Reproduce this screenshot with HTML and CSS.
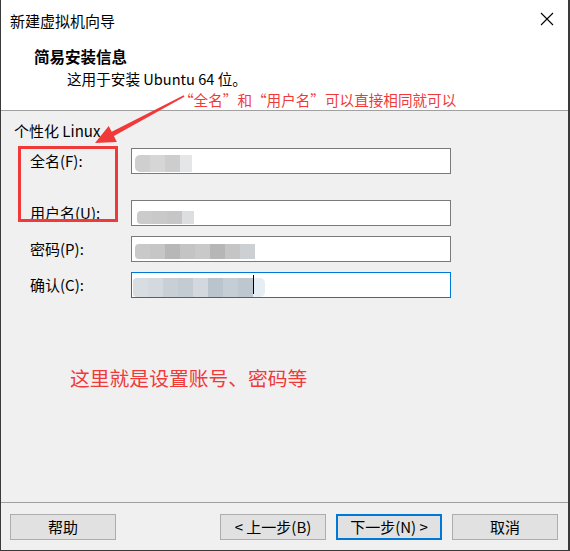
FILE: index.html
```html
<!DOCTYPE html>
<html lang="zh-CN">
<head>
<meta charset="utf-8">
<title>新建虚拟机向导</title>
<link rel="stylesheet" href="styles.css">
</head>
<body>
<div class="window">
  <div class="titlebar">
    <span class="title">新建虚拟机向导</span>
    <svg class="close" width="14" height="14" viewBox="0 0 14 14"><path d="M1 1 L13 13 M13 1 L1 13" stroke="#000" stroke-width="1.1" fill="none"/></svg>
  </div>
  <div class="header">
    <div class="heading">简易安装信息</div>
    <div class="subtitle">这用于安装 Ubuntu 64 位。</div>
  </div>
  <div class="content">
    <div class="group-label">个性化 Linux</div>
    <div class="form">
      <div class="row row-first">
        <label class="label">全名(F):</label>
        <div class="field">
          <span class="blur h17"><i class="c1"></i><i class="c2"></i><i class="c3"></i><i class="c4 narrow"></i></span>
        </div>
      </div>
      <div class="row">
        <label class="label">用户名(U):</label>
        <div class="field">
          <span class="blur h13 off2"><i class="c5"></i><i class="c6"></i><i class="c7"></i><i class="c8 narrow"></i></span>
        </div>
      </div>
      <div class="row">
        <label class="label">密码(P):</label>
        <div class="field">
          <span class="blur h15"><i class="d1"></i><i class="d2"></i><i class="d3"></i><i class="d4"></i><i class="d5"></i><i class="d6"></i><i class="d7"></i><i class="d8"></i></span>
        </div>
      </div>
      <div class="row">
        <label class="label">确认(C):</label>
        <div class="field focused">
          <span class="blur h20"><i class="e1"></i><i class="e2"></i><i class="e3"></i><i class="e4"></i><i class="e5"></i><i class="e6"></i><i class="e7"></i><i class="e8"></i><i class="e9 narrow"></i></span>
          <span class="caret"></span>
        </div>
      </div>
    </div>
  </div>
  <div class="footer">
    <button class="btn">帮助</button>
    <div class="spacer"></div>
    <button class="btn">&lt; 上一步(B)</button>
    <button class="btn default">下一步(N) &gt;</button>
    <button class="btn">取消</button>
  </div>

  <div class="note-top">“全名”和“用户名”可以直接相同就可以</div>
  <svg class="arrow" width="570" height="551" viewBox="0 0 570 551">
    <polygon points="183.7,95.2 111.7,131.7 108.7,125.9 95,143 116.9,141.9 113.9,136.1 184.4,96.8" fill="#f03a3a"/>
  </svg>
  <div class="mark-box"></div>
  <div class="note-mid">这里就是设置账号、密码等</div>
</div>
</body>
</html>
```
FILE: styles.css
```css
* { box-sizing: border-box; }
html, body { margin: 0; padding: 0; }
body {
  width: 570px;
  height: 551px;
  font-family: "Noto Sans CJK SC", "Noto Sans", sans-serif;
  font-size: 15px;
  color: #000;
  background: #f0f0f0;
}
.window {
  position: relative;
  width: 570px;
  height: 551px;
  border-left: 1px solid #3a3a3a;
  border-right: 2px solid #3a3a3a;
  border-bottom: 1px solid #3a3a3a;
  display: flex;
  flex-direction: column;
  background: #f0f0f0;
}
.titlebar {
  height: 42px;
  background: #fff;
  display: flex;
  align-items: center;
  padding-left: 9px;
  padding-right: 14px;
}
.title { line-height: 42px; flex: 1; }
.close { display: block; margin-top: -4px; }
.header {
  height: 69px;
  background: #fff;
  border-bottom: 1px solid #a0a0a0;
  padding-top: 4px;
  padding-left: 33px;
}
.heading { font-weight: bold; font-size: 15.5px; line-height: 20px; }
.subtitle { line-height: 20px; margin-top: 3px; padding-left: 33px; font-size: 14.6px; }
.content {
  flex: 1;
  padding: 10px 0 0 13px;
}
.group-label { line-height: 20px; }
.form {
  display: flex;
  flex-direction: column;
  gap: 10px;
  margin-top: 7px;
  padding-left: 16px;
}
.row { display: flex; align-items: center; height: 26px; }
.row-first { margin-bottom: 16px; }
.label { width: 101px; line-height: 20px; }
.field {
  position: relative;
  width: 320px;
  height: 26px;
  background: #fff;
  border: 1px solid #7a7a7a;
  display: flex;
  align-items: center;
  padding-left: 3px;
}
.field.focused { border-color: #0078d7; padding-left: 1px; }
.blur { display: flex; filter: blur(0.5px); }
.blur i { display: block; width: 15px; height: 100%; }
.blur i.narrow { width: 12px; }
.h17 { height: 17px; margin-top: 5px; }
.h13 { height: 13px; margin-top: 9px; }
.h15 { height: 15px; margin-top: 4px; }
.h20 { height: 19px; margin-top: 4px; }
.off2 { margin-left: 2px; }
.c1 { background: #cfcfcf; border-radius: 5px 0 0 5px; }
.c2 { background: #d6d6d6; }
.c3 { background: #cdcdcd; }
.c4 { background: #e4e6e8; }
.c5 { background: #cbcbcb; border-radius: 4px 0 0 4px; }
.c6 { background: #c9c9c9; }
.c7 { background: #c6c6c6; }
.c8 { background: #dcdee0; }
.d1 { background: #c9c9c9; border-radius: 4px 0 0 4px; }
.d2 { background: #c6c6c6; }
.d3 { background: #b7b7b7; }
.d4 { background: #c4c4c4; }
.d5 { background: #c9c9c9; }
.d6 { background: #b6b6b6; }
.d7 { background: #c5c5c5; }
.d8 { background: #cdd0d2; }
.e1 { background: #d8dde2; border-radius: 4px 0 0 4px; }
.e2 { background: #d3d9de; }
.e3 { background: #c8d0d6; }
.e4 { background: #c3ccd3; }
.e5 { background: #d2d8dd; }
.e6 { background: #b9c4cc; }
.e7 { background: #c5ced5; }
.e8 { background: #bcc7cf; }
.e9 { background: #e6eef5; border-radius: 0 5px 5px 0; }
.caret {
  position: absolute;
  left: 121px;
  top: 2px;
  width: 1px;
  height: 19px;
  background: #000;
}
.footer {
  height: 48px;
  border-top: 1px solid #a0a0a0;
  display: flex;
  align-items: flex-start;
  padding: 11px 10px 0 9px;
  gap: 10px;
}
.spacer { flex: 1; }
.btn {
  width: 106px;
  height: 26px;
  background: #e1e1e1;
  border: 1px solid #adadad;
  font-family: "Noto Sans CJK SC", "Noto Sans", sans-serif;
  font-size: 15px;
  color: #000;
  padding: 0;
  line-height: 22px;
}
.btn.default { border: 2px solid #0078d7; }
.note-top {
  position: absolute;
  left: 178px;
  top: 90px;
  color: #f03a3a;
  font-size: 14.6px;
  line-height: 20px;
  white-space: nowrap;
}
.arrow {
  position: absolute;
  left: -1px;
  top: 0;
  pointer-events: none;
}
.mark-box {
  position: absolute;
  left: 17px;
  top: 146px;
  width: 100px;
  height: 76px;
  border: 3px solid #f03a3a;
}
.note-mid {
  position: absolute;
  left: 69px;
  top: 365px;
  color: #f03a3a;
  font-size: 19.8px;
  line-height: 26px;
  white-space: nowrap;
}
```
